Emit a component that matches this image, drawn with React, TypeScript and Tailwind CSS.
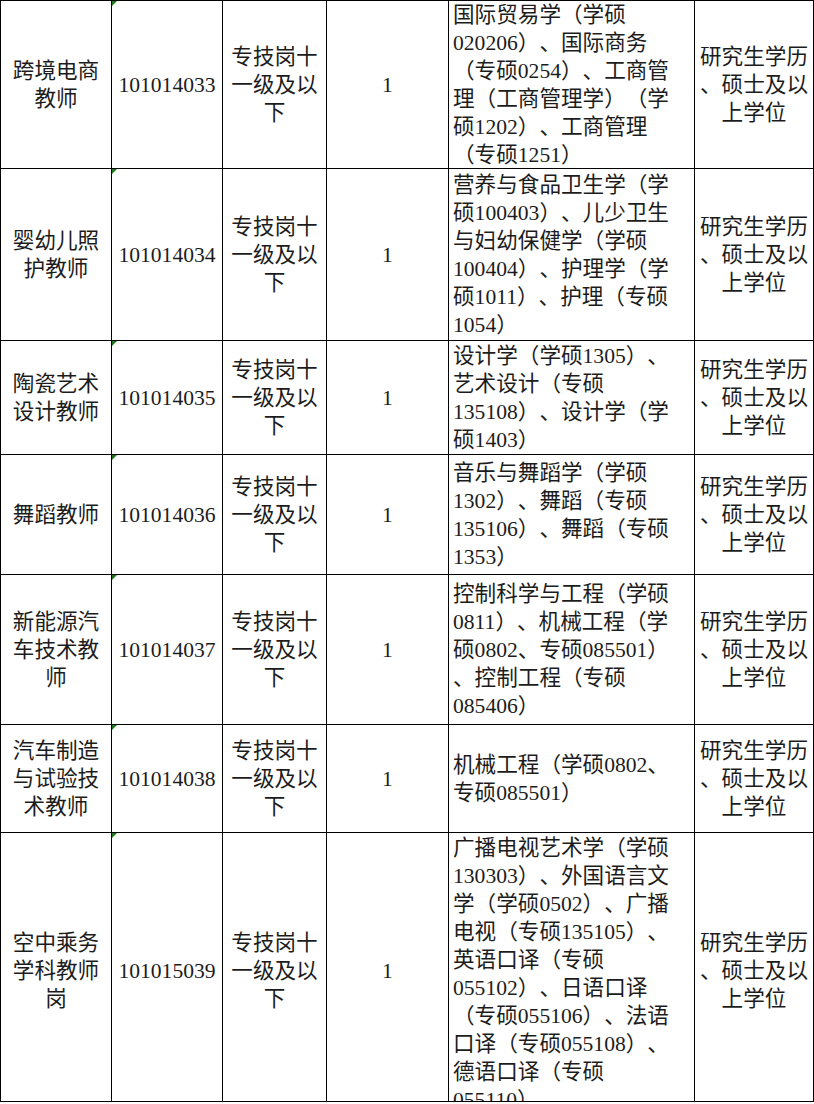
import React from "react";

type Row = {
  h: string;
  last?: boolean;
  name: string[];
  code: string;
  major: string[];
};

const rows: Row[] = [
  {
    h: "h-[168px]",
    name: ["跨境电商", "教师"],
    code: "101014033",
    major: [
      "国际贸易学（学硕",
      "020206）、国际商务",
      "（专硕0254）、工商管",
      "理（工商管理学）（学",
      "硕1202）、工商管理",
      "（专硕1251）",
    ],
  },
  {
    h: "h-[172px]",
    name: ["婴幼儿照", "护教师"],
    code: "101014034",
    major: [
      "营养与食品卫生学（学",
      "硕100403）、儿少卫生",
      "与妇幼保健学（学硕",
      "100404）、护理学（学",
      "硕1011）、护理（专硕",
      "1054）",
    ],
  },
  {
    h: "h-[114px]",
    name: ["陶瓷艺术", "设计教师"],
    code: "101014035",
    major: ["设计学（学硕1305）、", "艺术设计（专硕", "135108）、设计学（学", "硕1403）"],
  },
  {
    h: "h-[120px]",
    name: ["舞蹈教师"],
    code: "101014036",
    major: ["音乐与舞蹈学（学硕", "1302）、舞蹈（专硕", "135106）、舞蹈（专硕", "1353）"],
  },
  {
    h: "h-[150px]",
    name: ["新能源汽", "车技术教", "师"],
    code: "101014037",
    major: [
      "控制科学与工程（学硕",
      "0811）、机械工程（学",
      "硕0802、专硕085501）",
      "、控制工程（专硕",
      "085406）",
    ],
  },
  {
    h: "h-[108px]",
    name: ["汽车制造", "与试验技", "术教师"],
    code: "101014038",
    major: ["机械工程（学硕0802、", "专硕085501）"],
  },
  {
    h: "h-[269px]",
    last: true,
    name: ["空中乘务", "学科教师", "岗"],
    code: "101015039",
    major: [
      "广播电视艺术学（学硕",
      "130303）、外国语言文",
      "学（学硕0502）、广播",
      "电视（专硕135105）、",
      "英语口译（专硕",
      "055102）、日语口译",
      "（专硕055106）、法语",
      "口译（专硕055108）、",
      "德语口译（专硕",
      "055110）",
    ],
  },
];

function Lines({ lines }: { lines: string[] }) {
  return (
    <div>
      {lines.map((l, i) => (
        <div key={i} className="whitespace-nowrap">
          {l}
        </div>
      ))}
    </div>
  );
}

export default function App() {
  const cell =
    "relative flex overflow-hidden border-r border-b border-black leading-[28px]";
  return (
    <div
      className="w-[814px] bg-white text-[21.6px] text-[#1c1c1c] [text-spacing-trim:space-all]"
      style={{ fontFamily: '"Liberation Serif", "Noto Sans CJK SC", serif' }}
    >
      <div className="border-l border-t border-black">
        {rows.map((r, idx) => {
          const vc = r.last ? "items-center pt-[7px]" : "items-center";
          return (
            <div
              key={idx}
              className={`grid grid-cols-[111px_111px_104px_122px_246px_119px] ${r.h}`}
            >
              <div className={`${cell} ${vc} justify-center text-center`}>
                <Lines lines={r.name} />
              </div>
              <div className={`${cell} ${vc} justify-center text-center`}>
                <span className="absolute left-0 top-0 h-0 w-0 border-t-[5px] border-r-[5px] border-t-[#1f7a1f] border-r-transparent" />
                <span>{r.code}</span>
              </div>
              <div className={`${cell} ${vc} justify-center text-center`}>
                <Lines lines={["专技岗十", "一级及以", "下"]} />
              </div>
              <div className={`${cell} ${vc} justify-center text-center`}>
                <span>1</span>
              </div>
              <div
                className={`${cell} ${
                  r.last ? "items-start pt-[1px]" : "items-center"
                } justify-start pl-[4px] text-left`}
              >
                <Lines lines={r.major} />
              </div>
              <div className={`${cell} ${vc} justify-center text-center`}>
                <Lines lines={["研究生学历", "、硕士及以", "上学位"]} />
              </div>
            </div>
          );
        })}
      </div>
    </div>
  );
}
